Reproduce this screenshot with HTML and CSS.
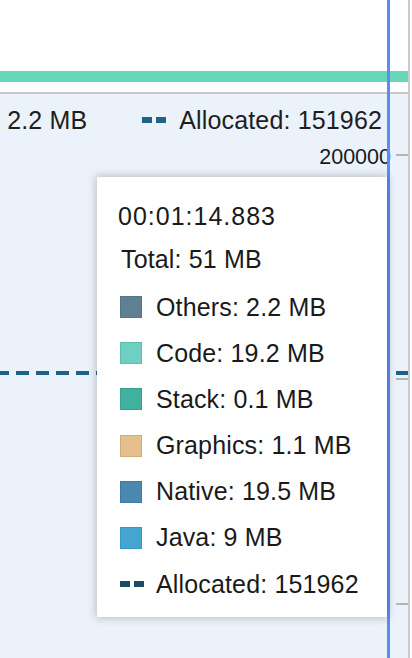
FILE: index.html
```html
<!DOCTYPE html>
<html>
<head>
<meta charset="utf-8">
<link rel="stylesheet" href="styles.css">
</head>
<body>
<div class="panel">
  <div class="top"></div>
  <div class="green-bar"></div>
  <div class="top-gap"></div>
  <div class="chart">
    <div class="legend">
      <div class="legend-item"><span class="sq sq-others"></span><span>Others: 2.2 MB</span></div>
      <div class="legend-item"><span class="dash-icon dash-legend"><i></i><i></i></span><span>Allocated: 151962</span></div>
    </div>
    <div class="axis-label label-200k">200000</div>
    <div class="tick tick-1"></div>
    <div class="tick tick-2"></div>
    <div class="tick tick-3"></div>
    <div class="alloc-line"></div>
  </div>
</div>
<div class="cursor"></div>
<div class="tooltip">
  <div class="tt-title">00:01:14.883</div>
  <div class="tt-total">Total: 51 MB</div>
  <div class="tt-list">
    <div class="tt-row"><span class="slot"><span class="sq sq-others"></span></span><span>Others: 2.2 MB</span></div>
    <div class="tt-row"><span class="slot"><span class="sq sq-code"></span></span><span>Code: 19.2 MB</span></div>
    <div class="tt-row"><span class="slot"><span class="sq sq-stack"></span></span><span>Stack: 0.1 MB</span></div>
    <div class="tt-row"><span class="slot"><span class="sq sq-graphics"></span></span><span>Graphics: 1.1 MB</span></div>
    <div class="tt-row"><span class="slot"><span class="sq sq-native"></span></span><span>Native: 19.5 MB</span></div>
    <div class="tt-row"><span class="slot"><span class="sq sq-java"></span></span><span>Java: 9 MB</span></div>
    <div class="tt-row"><span class="slot"><span class="dash-icon dash-tt"><i></i><i></i></span></span><span>Allocated: 151962</span></div>
  </div>
</div>
</body>
</html>
```

FILE: styles.css
```css
html, body {
  margin: 0;
  padding: 0;
  background: #ffffff;
  width: 412px;
  height: 658px;
  overflow: hidden;
  font-family: "Liberation Sans", Arial, sans-serif;
  color: #1a1a1a;
}

.panel {
  width: 408px;
  height: 658px;
  border-right: 2px solid #cbcbcb;
  display: flex;
  flex-direction: column;
}

.top {
  height: 71px;
  background: #ffffff;
}

.green-bar {
  height: 11px;
  background: #66d8b7;
}

.top-gap {
  height: 10px;
  background: #ffffff;
  border-bottom: 2px solid #c8c8c8;
}

.chart {
  position: relative;
  flex: 1;
  background: #ecf2fa;
  overflow: hidden;
}

.legend {
  display: flex;
  justify-content: flex-end;
  align-items: center;
  gap: 55px;
  height: 28px;
  margin-top: 12px;
  padding-right: 26px;
  font-size: 25px;
  letter-spacing: 0.15px;
  line-height: 28px;
  color: #1e1e1e;
  white-space: nowrap;
}

.legend-item {
  display: flex;
  align-items: center;
  gap: 13px;
  flex-shrink: 0;
}

.sq {
  display: block;
  width: 22px;
  height: 22px;
  box-sizing: border-box;
  border: 1.5px solid;
}

.sq-others { background: #5f7f93; border-color: #557487; }
.sq-code { background: #6dd0c0; border-color: #5cbfae; }
.sq-stack { background: #40b09f; border-color: #37a08f; }
.sq-graphics { background: #e3c08e; border-color: #d3ab74; }
.sq-native { background: #4a89af; border-color: #3f7aa0; }
.sq-java { background: #44a5d1; border-color: #3a95c2; }

.dash-icon {
  display: flex;
  gap: 4px;
  width: 24px;
}

.dash-icon i {
  display: block;
  width: 10px;
  height: 6px;
}

.dash-legend i { background: #1f6389; }
.dash-tt i { background: #1c4b64; }

.axis-label {
  position: absolute;
  font-size: 21.5px;
  line-height: 24px;
  color: #1a1a1a;
}

.label-200k {
  right: 17px;
  top: 51px;
}

.tick {
  position: absolute;
  left: 396px;
  width: 12px;
  height: 1.5px;
  background: #b3b3b3;
}

.tick-1 { top: 60px; }
.tick-2 { top: 284px; }
.tick-3 { top: 509px; }

.alloc-line {
  position: absolute;
  left: 0;
  right: 0;
  top: 277px;
  height: 4px;
  background: repeating-linear-gradient(90deg, #1f6289 0px, #1f6289 12.7px, transparent 12.7px, transparent 20px);
  background-position: -4px 0;
}

.cursor {
  position: absolute;
  left: 387px;
  top: 0;
  width: 3px;
  height: 658px;
  background: #5a8bf6;
}

.tooltip {
  position: absolute;
  left: 97px;
  top: 177px;
  width: 290px;
  height: 440px;
  box-sizing: border-box;
  padding: 25px 0 0 21px;
  background: #ffffff;
  box-shadow: 0 0 8px 1px rgba(40, 50, 70, 0.28);
  font-size: 25px;
  letter-spacing: 0.15px;
  color: #1a1a1a;
}

.tt-title {
  line-height: 28px;
  height: 28px;
  letter-spacing: 1px;
}

.tt-total {
  margin-top: 6px;
  margin-left: 3px;
  height: 46px;
  line-height: 46px;
}

.tt-list {
  margin-top: 2px;
  display: flex;
  flex-direction: column;
}

.tt-row {
  display: flex;
  align-items: center;
  height: 46.17px;
  white-space: nowrap;
}

.slot {
  display: flex;
  align-items: center;
  width: 38px;
  padding-left: 2px;
  box-sizing: border-box;
  flex-shrink: 0;
}
```
